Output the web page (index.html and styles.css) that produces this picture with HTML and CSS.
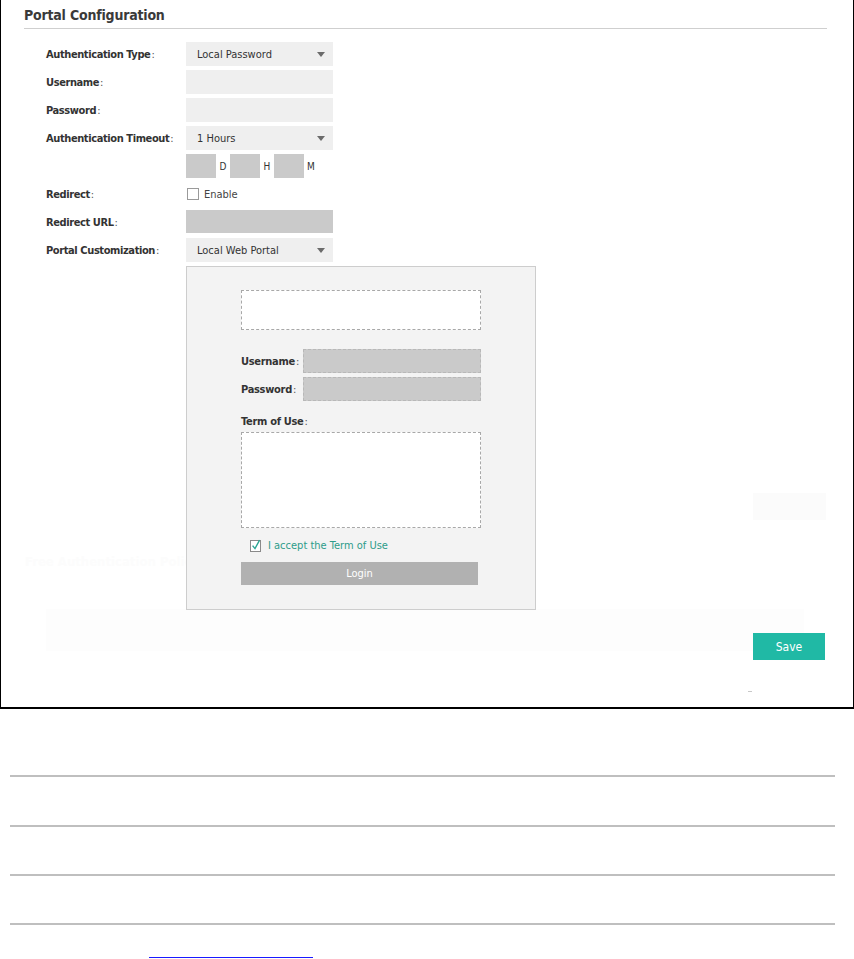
FILE: index.html
```html
<!DOCTYPE html>
<html lang="en">
<head>
<meta charset="utf-8">
<title>Portal Configuration</title>
<link rel="stylesheet" href="styles.css">
</head>
<body>
<div class="frame">
  <div class="ghost">
    <div class="ghost-title">Free Authentication Policy</div>
    <div class="ghost-band"></div>
    <div class="ghost-btn"></div>
    <div class="ghost-dash"></div>
  </div>
  <div class="header"><h1 class="title">Portal Configuration</h1></div>
  <div class="form">
    <div class="label">Authentication Type<span class="colon">:</span></div>
    <div class="select"><span>Local Password</span><span class="caret"></span></div>

    <div class="label">Username<span class="colon">:</span></div>
    <div class="input"></div>

    <div class="label">Password<span class="colon">:</span></div>
    <div class="input"></div>

    <div class="label">Authentication Timeout<span class="colon">:</span></div>
    <div class="select"><span>1 Hours</span><span class="caret"></span></div>

    <div class="label"></div>
    <div class="dhm">
      <span class="tbox"></span><span class="unit">D</span>
      <span class="tbox"></span><span class="unit">H</span>
      <span class="tbox"></span><span class="unit">M</span>
    </div>

    <div class="label">Redirect<span class="colon">:</span></div>
    <div class="check-row"><span class="checkbox"></span><span class="check-text">Enable</span></div>

    <div class="label">Redirect URL<span class="colon">:</span></div>
    <div class="input disabled"></div>

    <div class="label">Portal Customization<span class="colon">:</span></div>
    <div class="select"><span>Local Web Portal</span><span class="caret"></span></div>

    <div class="label"></div>
    <div class="preview">
      <div class="logo-box"></div>
      <div class="p-row p-first">
        <span class="p-label">Username<span class="colon">:</span></span>
        <span class="p-input"></span>
      </div>
      <div class="p-row">
        <span class="p-label">Password<span class="colon">:</span></span>
        <span class="p-input"></span>
      </div>
      <div class="p-term">Term of Use<span class="colon">:</span></div>
      <div class="term-box"></div>
      <div class="accept">
        <svg class="accept-box" width="12" height="13" viewBox="0 0 12 13">
          <rect x="0.5" y="1.5" width="10" height="11" fill="#fff" stroke="#8a8a8a"/>
          <path d="M2.6 6.6 L5 9.6 L9.6 1.2" fill="none" stroke="#2aa593" stroke-width="1.4"/>
        </svg>
        <span class="accept-text">I accept the Term of Use</span>
      </div>
      <div class="login">Login</div>
    </div>
  </div>
  <div class="save-row"><button class="save">Save</button></div>
</div>
<div class="rules">
  <div class="rule"></div>
  <div class="rule"></div>
  <div class="rule"></div>
  <div class="rule"></div>
  <div class="link-row"><a class="link" href="#"></a></div>
</div>
</body>
</html>
```
FILE: styles.css
```css
* { box-sizing: border-box; }
html, body { margin: 0; padding: 0; background: #fff; }
body {
  font-family: "DejaVu Sans Condensed", "DejaVu Sans", sans-serif;
  font-size: 11px;
  color: #333;
  overflow: hidden;
}
.frame {
  position: relative;
  width: 854px;
  height: 709px;
  border-left: 1px solid #000;
  border-right: 1px solid #000;
  border-bottom: 2px solid #000;
}
.ghost { position: absolute; inset: 0; pointer-events: none; z-index: 0; }
.ghost-title {
  position: absolute; left: 24px; top: 554px;
  font-size: 13px; font-weight: bold; color: #fcfcfc;
}
.ghost-band {
  position: absolute; left: 45px; top: 609px; width: 758px; height: 42px;
  background: #fdfdfd;
}
.ghost-btn {
  position: absolute; left: 752px; top: 493px; width: 73px; height: 27px;
  background: #fbfbfb;
}
.ghost-dash {
  position: absolute; left: 747px; top: 691px; width: 4px; height: 1px;
  background: #c8c8c8;
}
.header {
  position: relative;
  z-index: 1;
  margin-left: 23px;
  width: 803px;
  padding-top: 6px;
  padding-bottom: 4px;
  border-bottom: 1px solid #cfcfcf;
}
.title {
  margin: 0;
  font-size: 14px;
  line-height: 18px;
  font-weight: bold;
  color: #3a3a3a;
  letter-spacing: -0.2px;
}
.form {
  position: relative;
  z-index: 1;
  margin-top: 13px;
  padding-left: 45px;
  display: grid;
  grid-template-columns: 140px 360px;
  grid-template-rows: repeat(8, 24px) auto;
  row-gap: 4px;
}
.label {
  display: flex;
  align-items: center;
  font-weight: bold;
  color: #333;
  white-space: nowrap;
  letter-spacing: -0.4px;
}
.colon { font-weight: normal; color: #555; letter-spacing: 0; margin-left: 1px; }
.select {
  width: 147px;
  height: 24px;
  background: #efefef;
  display: flex;
  align-items: center;
  justify-content: space-between;
  padding: 0 8px 0 11px;
  color: #333;
}
.caret {
  width: 0; height: 0;
  border-left: 4px solid transparent;
  border-right: 4px solid transparent;
  border-top: 5px solid #6b6b6b;
}
.input {
  width: 147px;
  height: 24px;
  background: #efefef;
}
.input.disabled { background: #cacaca; height: 23px; }
.dhm { display: flex; align-items: center; }
.tbox { width: 30px; height: 24px; background: #cacaca; }
.unit { width: 14px; text-align: center; font-size: 10px; color: #333; }
.check-row { display: flex; align-items: center; }
.checkbox {
  width: 12px; height: 12px;
  margin-left: 1px;
  border: 1px solid #9a9a9a;
  background: #fff;
}
.check-text { margin-left: 5px; color: #444; }
.preview {
  position: relative;
  width: 350px;
  height: 344px;
  background: #f3f3f3;
  border: 1px solid #cdcdcd;
  padding: 23px 0 0 54px;
  display: flex;
  flex-direction: column;
  align-items: flex-start;
}
.logo-box {
  width: 240px; height: 40px;
  background: #fff;
  border: 1px dashed #a8a8a8;
}
.p-row { display: flex; align-items: center; width: 240px; height: 24px; margin-top: 4px; }
.p-row.p-first { margin-top: 19px; }
.p-label { width: 62px; font-weight: bold; color: #333; white-space: nowrap; letter-spacing: -0.3px; }
.p-input {
  width: 178px; height: 24px;
  background: #cacaca;
  border: 1px dashed #b8b8b8;
}
.p-term {
  margin-top: 14px;
  height: 14px;
  line-height: 14px;
  font-weight: bold;
  color: #333;
  letter-spacing: -0.3px;
}
.term-box {
  margin-top: 3px;
  width: 240px; height: 96px;
  background: #fff;
  border: 1px dashed #a8a8a8;
}
.accept {
  margin-top: 10px;
  margin-left: 9px;
  height: 14px;
  display: flex;
  align-items: center;
}
.accept-box { display: block; }
.accept-text { margin-left: 6px; color: #2d9c8a; }
.login {
  margin-top: 10px;
  width: 237px; height: 23px;
  background: #b1b1b1;
  color: #fff;
  display: flex;
  align-items: center;
  justify-content: center;
}
.save-row {
  position: relative;
  z-index: 1;
  display: flex;
  justify-content: flex-end;
  padding-right: 28px;
  margin-top: 23px;
}
.save {
  width: 72px; height: 27px;
  background: #20b9a5;
  border: none;
  color: #fff;
  font-family: inherit;
  font-size: 12px;
  padding: 0;
}
.rules {
  padding: 66px 0 0 10px;
}
.rule {
  width: 825px;
  height: 2px;
  background: #bfbfbf;
  margin-bottom: 47px;
}
.rule:first-child { margin-bottom: 48px; }
.rule:nth-child(4) { margin-bottom: 0; }
.link-row { margin-top: 32px; padding-left: 139px; height: 20px; }
.link {
  display: block;
  width: 164px;
  height: 1px;
  border-bottom: 1px solid #1a1aff;
}
```
